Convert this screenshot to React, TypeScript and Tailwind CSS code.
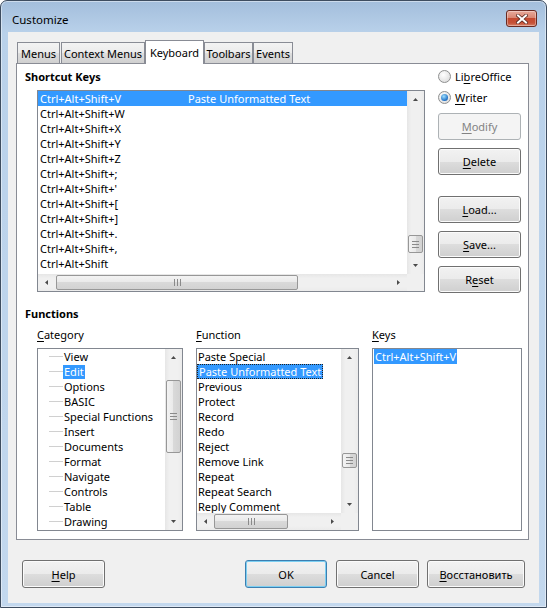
import React from "react";

const shortcuts = [
  "Ctrl+Alt+Shift+V",
  "Ctrl+Alt+Shift+W",
  "Ctrl+Alt+Shift+X",
  "Ctrl+Alt+Shift+Y",
  "Ctrl+Alt+Shift+Z",
  "Ctrl+Alt+Shift+;",
  "Ctrl+Alt+Shift+'",
  "Ctrl+Alt+Shift+[",
  "Ctrl+Alt+Shift+]",
  "Ctrl+Alt+Shift+.",
  "Ctrl+Alt+Shift+,",
  "Ctrl+Alt+Shift",
  "Ctrl+Alt+Shift+Bl",
];

const categories = [
  "View",
  "Edit",
  "Options",
  "BASIC",
  "Special Functions",
  "Insert",
  "Documents",
  "Format",
  "Navigate",
  "Controls",
  "Table",
  "Drawing",
];

const functions = [
  "Paste Special",
  "Paste Unformatted Text",
  "Previous",
  "Protect",
  "Record",
  "Redo",
  "Reject",
  "Remove Link",
  "Repeat",
  "Repeat Search",
  "Reply Comment",
];

// label with the mnemonic letter underlined
function Mn({ t, u }: { t: string; u?: number }) {
  if (u === undefined) return <>{t}</>;
  return (
    <>
      {t.slice(0, u)}
      <span className="underline underline-offset-[2px]">{t[u]}</span>
      {t.slice(u + 1)}
    </>
  );
}

function Button({
  label,
  u,
  className = "",
  disabled,
  def,
}: {
  label: string;
  u?: number;
  className?: string;
  disabled?: boolean;
  def?: boolean;
}) {
  const skin = disabled
    ? "border-[#adb2b5] bg-[#f4f4f4] text-[#838383]"
    : def
    ? "border-[#3c7fb1] shadow-[inset_0_0_0_1px_#7ccff2] bg-[linear-gradient(#f2f2f2,#ebebeb_50%,#dddddd_50%,#cfcfcf)]"
    : "border-[#707070] shadow-[inset_0_0_0_1px_#fbfbfb] bg-[linear-gradient(#f2f2f2,#ebebeb_50%,#dddddd_50%,#cfcfcf)]";
  return (
    <div className={`flex items-center justify-center rounded-[3px] border leading-[15px] ${skin} ${className}`}>
      <span>
        <Mn t={label} u={u} />
      </span>
    </div>
  );
}

function Arrow({ dir }: { dir: "up" | "down" | "left" | "right" }) {
  if (dir === "up")
    return (
      <svg width="5" height="3" viewBox="0 0 5 3">
        <polygon points="0,3 2.5,0 5,3" fill="#4a4a4a" />
      </svg>
    );
  if (dir === "down")
    return (
      <svg width="5" height="3" viewBox="0 0 5 3">
        <polygon points="0,0 5,0 2.5,3" fill="#4a4a4a" />
      </svg>
    );
  if (dir === "left")
    return (
      <svg width="3" height="5" viewBox="0 0 3 5">
        <polygon points="3,0 3,5 0,2.5" fill="#4a4a4a" />
      </svg>
    );
  return (
    <svg width="3" height="5" viewBox="0 0 3 5">
      <polygon points="0,0 0,5 3,2.5" fill="#4a4a4a" />
    </svg>
  );
}

function VScroll({ thumb }: { thumb: string }) {
  return (
    <div className="w-[17px] h-full flex flex-col bg-[linear-gradient(90deg,#e6e6e6,#f0f0f0_25%,#f0f0f0_75%,#ebebeb)]">
      <div className="h-[17px] flex items-center justify-center">
        <Arrow dir="up" />
      </div>
      <div className="flex-1 flex flex-col items-center">
        <div
          className={`w-[15px] rounded-[2px] border border-[#979797] bg-[linear-gradient(90deg,#f3f3f3,#e9e9e9_50%,#d9d9d9_50%,#d2d2d2)] flex flex-col items-center justify-center gap-[2px] ${thumb}`}
        >
          <span className="w-[7px] h-px bg-[#8a8a8a]" />
          <span className="w-[7px] h-px bg-[#8a8a8a]" />
          <span className="w-[7px] h-px bg-[#8a8a8a]" />
        </div>
      </div>
      <div className="h-[17px] flex items-center justify-center">
        <Arrow dir="down" />
      </div>
    </div>
  );
}

function HScroll({ thumb }: { thumb: string }) {
  return (
    <div className="flex-1 h-[17px] flex bg-[linear-gradient(#e6e6e6,#f0f0f0_25%,#f0f0f0_75%,#ebebeb)]">
      <div className="w-[17px] flex items-center justify-center">
        <Arrow dir="left" />
      </div>
      <div className="flex-1 flex items-center">
        <div
          className={`h-[15px] rounded-[2px] border border-[#979797] bg-[linear-gradient(#f3f3f3,#e9e9e9_50%,#d9d9d9_50%,#d2d2d2)] flex items-center justify-center gap-[2px] ${thumb}`}
        >
          <span className="w-px h-[7px] bg-[#8a8a8a]" />
          <span className="w-px h-[7px] bg-[#8a8a8a]" />
          <span className="w-px h-[7px] bg-[#8a8a8a]" />
        </div>
      </div>
      <div className="w-[17px] flex items-center justify-center">
        <Arrow dir="right" />
      </div>
    </div>
  );
}

function Radio({ label, u, checked }: { label: string; u: number; checked?: boolean }) {
  return (
    <div className="h-[15px] flex items-center gap-[4px]">
      <span className="w-[13px] h-[13px] rounded-full border border-[#8e8f8f] bg-[radial-gradient(circle_at_40%_35%,#ffffff,#d6d6d6)] flex items-center justify-center">
        {checked && (
          <span className="w-[7px] h-[7px] rounded-full bg-[radial-gradient(circle_at_40%_35%,#9fe0ff,#1e6fc4_70%,#123f7a)]" />
        )}
      </span>
      <span className="leading-[15px]">
        <Mn t={label} u={u} />
      </span>
    </div>
  );
}

function CloseButton() {
  return (
    <div className="w-[31px] h-[17px] rounded-[3px] border border-[#6a2a21] bg-[linear-gradient(#e8aa9b,#d98672_45%,#c4492f_50%,#c65238_80%,#d7826a)] shadow-[inset_0_0_0_1px_rgba(255,255,255,0.35)] flex items-center justify-center">
      <svg width="12" height="10" viewBox="0 0 12 10">
        <path d="M2 1.5 L10 8.5 M10 1.5 L2 8.5" stroke="#5a2a22" strokeWidth="3.6" strokeLinecap="square" />
        <path d="M2 1.5 L10 8.5 M10 1.5 L2 8.5" stroke="#ffffff" strokeWidth="2" strokeLinecap="square" />
      </svg>
    </div>
  );
}

function Tab({ label, w, active }: { label: string; w: string; active?: boolean }) {
  return active ? (
    <div className={`relative z-10 -mb-px h-[24px] bg-white border border-b-0 border-[#898c95] flex items-center justify-center leading-[15px] ${w}`}>
      {label}
    </div>
  ) : (
    <div className={`h-[21px] border border-b-0 border-[#898c95] bg-[linear-gradient(#f3f3f3,#ebebeb_50%,#dedede_50%,#d0d0d0)] flex items-center justify-center leading-[15px] ${w}`}>
      {label}
    </div>
  );
}

export default function App() {
  return (
    <div className="w-[547px] h-[608px] flex flex-col rounded-t-[7px] border border-[#3e4d60] bg-[linear-gradient(#a3bedc,#b9d1ea_32px,#c3d8ee)] shadow-[inset_0_0_0_1px_rgba(255,255,255,0.45)] font-['Noto_Sans',sans-serif] text-[11px] text-black select-none overflow-hidden">
      {/* title bar */}
      <div className="h-[31px] flex items-start pt-[9px] pl-[11px] pr-[9px]">
        <span className="mt-[2px] leading-[15px] text-[11.5px]">Customize</span>
        <div className="flex-1" />
        <CloseButton />
      </div>

      {/* client area */}
      <div className="mx-[7px] h-[571px] bg-[#f0f0f0] flex flex-col pt-[8px]">
        <div className="h-[23px] pl-[9px] flex items-end">
          <Tab label="Menus" w="w-[43px]" />
          <Tab label="Context Menus" w="w-[84px] ml-[1px]" />
          <Tab label="Keyboard" w="w-[59px]" active />
          <Tab label="Toolbars" w="w-[49px]" />
          <Tab label="Events" w="w-[40px]" />
        </div>

        <div className="ml-[8px] w-[513px] h-[477px] border border-[#898c95] bg-white flex flex-col">
          <div className="flex pt-[5px]">
            <div className="w-[421px] flex flex-col">
              <div className="pl-[8px] leading-[15px] font-bold">Shortcut Keys</div>
              <div className="ml-[20px] mt-[6px] w-[388px] h-[202px] border border-[#828790] bg-white flex flex-col">
                <div className="flex h-[183px]">
                  <div className="flex-1 overflow-hidden">
                    {shortcuts.map((s, i) => (
                      <div
                        key={s}
                        className={`h-[15px] leading-[15px] flex pl-[2px] whitespace-nowrap ${i === 0 ? "bg-[#3399ff] text-white" : ""}`}
                      >
                        <span className="w-[148px]">{s}</span>
                        {i === 0 && <span>Paste Unformatted Text</span>}
                      </div>
                    ))}
                  </div>
                  <VScroll thumb="mt-[127px] h-[18px]" />
                </div>
                <div className="flex h-[17px]">
                  <HScroll thumb="ml-[1px] w-[242px]" />
                  <div className="w-[17px] bg-[#f0f0f0]" />
                </div>
              </div>
            </div>

            <div className="w-[83px] flex flex-col">
              <Radio label="LibreOffice" u={2} />
              <div className="mt-[6px]">
                <Radio label="Writer" u={0} checked />
              </div>
              <Button label="Modify" u={0} disabled className="mt-[8px] h-[27px]" />
              <Button label="Delete" u={0} className="mt-[8px] h-[27px]" />
              <Button label="Load..." u={0} className="mt-[21px] h-[27px]" />
              <Button label="Save..." u={0} className="mt-[8px] h-[27px]" />
              <Button label="Reset" u={1} className="mt-[8px] h-[27px]" />
            </div>
          </div>

          <div className="pl-[8px] mt-[13px] leading-[15px] font-bold">Functions</div>

          <div className="ml-[20px] mt-[6px] flex gap-[13px]">
            {/* category */}
            <div className="w-[146px] flex flex-col">
              <div className="leading-[15px]">
                <Mn t="Category" u={0} />
              </div>
              <div className="mt-[6px] h-[183px] border border-[#828790] bg-white flex">
                <div className="flex-1 overflow-hidden">
                  {categories.map((c) => (
                    <div key={c} className="h-[15px] flex items-center whitespace-nowrap">
                      <span className="ml-[11px] w-[14px] h-px bg-[#d0d0d0]" />
                      <span
                        className={`h-[14px] px-[1px] flex items-center leading-[14px] ${c === "Edit" ? "bg-[#3399ff] text-white" : ""}`}
                      >
                        {c}
                      </span>
                    </div>
                  ))}
                </div>
                <VScroll thumb="mt-[14px] h-[73px]" />
              </div>
            </div>

            {/* function */}
            <div className="w-[163px] flex flex-col">
              <div className="leading-[15px]">
                <Mn t="Function" u={0} />
              </div>
              <div className="mt-[6px] h-[183px] border border-[#828790] bg-white flex flex-col">
                <div className="flex h-[164px]">
                  <div className="flex-1 overflow-hidden">
                    {functions.map((f, i) => (
                      <div key={f} className="h-[15px] flex whitespace-nowrap">
                        {i === 1 ? (
                          <span className="h-[15px] px-[1px] leading-[13px] bg-[#3399ff] text-white border border-dotted border-[#202020]">
                            {f}
                          </span>
                        ) : (
                          <span className="pl-[1px] leading-[15px]">{f}</span>
                        )}
                      </div>
                    ))}
                  </div>
                  <VScroll thumb="mt-[87px] h-[15px]" />
                </div>
                <div className="flex h-[17px]">
                  <HScroll thumb="w-[74px]" />
                  <div className="w-[17px] bg-[#f0f0f0]" />
                </div>
              </div>
            </div>

            {/* keys */}
            <div className="w-[150px] flex flex-col">
              <div className="leading-[15px]">
                <Mn t="Keys" u={0} />
              </div>
              <div className="mt-[6px] h-[183px] border border-[#828790] bg-white">
                <div className="h-[15px] flex pl-[1px]">
                  <span className="leading-[15px] bg-[#3399ff] text-white pl-[1px] pr-[1px]">Ctrl+Alt+Shift+V</span>
                </div>
              </div>
            </div>
          </div>
        </div>

        <div className="mt-[20px] pl-[14px] flex">
          <Button label="Help" u={0} className="w-[83px] h-[28px]" />
          <Button label="OK" def className="ml-[140px] w-[82px] h-[28px]" />
          <Button label="Cancel" className="ml-[9px] w-[83px] h-[28px]" />
          <Button label="Восстановить" u={0} className="ml-[8px] w-[98px] h-[28px]" />
        </div>
      </div>
    </div>
  );
}
